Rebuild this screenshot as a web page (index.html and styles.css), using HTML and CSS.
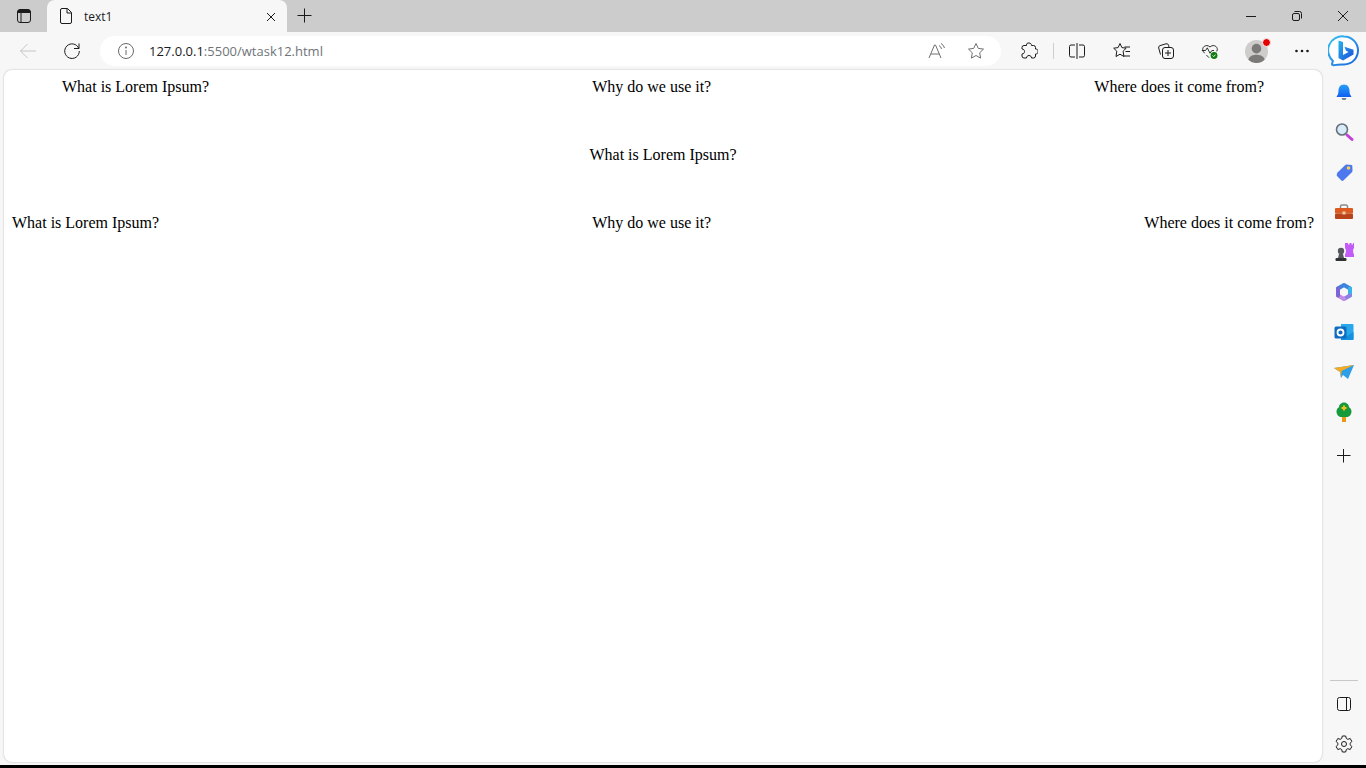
FILE: index.html
```html
<!DOCTYPE html>
<html lang="en">
<head>
<meta charset="utf-8">
<title>text1</title>
<link rel="stylesheet" href="styles.css">
</head>
<body>
<div class="window">
  <header class="tabstrip">
    <div class="tab-actions">
      <svg class="icon" viewBox="0 0 16 16"><rect x="1.500" y="1.500" width="13" height="13" rx="2.500" class="st"/><path d="M5 4.500v10" class="st"/><path d="M1.500 4a2.500 2.500 0 0 1 2.500-2.500h8a2.500 2.500 0 0 1 2.500 2.500v1h-13z" class="fl"/></svg>
    </div>
    <div class="tab">
      <svg class="icon tab-file" viewBox="0 0 16 16"><path d="M4 .5h5.500l4 4V14a1.500 1.500 0 0 1-1.500 1.500H4A1.500 1.500 0 0 1 2.500 14V2A1.500 1.500 0 0 1 4 .5zM9 .5V5h4.500" class="st"/></svg>
      <span class="tab-title">text1</span>
      <svg class="icon-sm" viewBox="0 -1 10 10"><path d="M1 1l8 8M9 1l-8 8" class="st"/></svg>
    </div>
    <div class="new-tab">
      <svg class="icon" viewBox="0 0 16 16"><path d="M7.500 .5v14M.5 7.500h14" class="st"/></svg>
    </div>
    <div class="spacer"></div>
    <div class="winbtn"><svg class="icon-sm" viewBox="0 0 10 10"><path d="M0 5.500h10" class="st"/></svg></div>
    <div class="winbtn"><svg class="icon-sm" viewBox="0 0 10 10"><rect x=".5" y="2.500" width="7" height="7" rx="1.500" class="st"/><path d="M2.500 .5h5a2 2 0 0 1 2 2v5" class="st"/></svg></div>
    <div class="winbtn"><svg class="icon-sm" viewBox="0 0 10 10"><path d="M0 0l10 10M10 0l-10 10" class="st"/></svg></div>
  </header>

  <nav class="toolbar">
    <div class="tbtn"><svg class="icon-l dim" viewBox="0 0 18 18"><path d="M17 9H1.500M8.500 2L1.500 9l7 7" class="st"/></svg></div>
    <div class="tbtn"><svg class="icon-l" viewBox="0 0 18 18"><path d="M15.800 6.500A7.300 7.300 0 1 0 16.300 9M16 1.500v5h-5" class="st"/></svg></div>
    <div class="address">
      <svg class="icon-l info" viewBox="0 0 18 18"><circle cx="9" cy="9" r="7.500" class="st"/><path d="M9 8v5" class="st"/><circle cx="9" cy="5.500" r="1" class="fl"/></svg>
      <span class="url"><span class="url-host">127.0.0.1</span>:5500/wtask12.html</span>
      <svg class="icon-l addr-read" viewBox="0 0 20 18"><path d="M2 16L7.500 3h1L14 16M4 12h8.500M12 3.500a4.500 4.500 0 0 1 2.500 3.500M14 1.500a7 7 0 0 1 3.500 4.500" class="st"/></svg>
      <svg class="icon-l addr-star" viewBox="0 0 18 18"><path d="M9 1.500l2.300 4.900 5.200.7-3.800 3.700.9 5.300L9 13.500l-4.600 2.600.9-5.300L1.500 7.100l5.200-.7z" class="st"/></svg>
    </div>
    <div class="tbtn-n ext"><svg class="icon-l" viewBox="0 0 18 18"><path d="M6.500 3.500C6.500 1 7.500 1 9 1s2.500 1 2.500 2.500h2a2 2 0 0 1 2 2V7c2 0 2.500 1 2.500 2.500S17.500 12 15.500 12v2a2 2 0 0 1-2 2h-2c0-1.500-1-2.500-2.500-2.500S6.500 14.500 6.500 16H4a2 2 0 0 1-2-2v-2c1.500 0 2.500-1 2.500-2.500S3.500 7 2 7V5.500a2 2 0 0 1 2-2z" class="st"/></svg></div>
    <div class="sep"></div>
    <div class="tbtn-n split"><svg class="icon-l" viewBox="0 0 18 18"><path d="M7 3H3a1.500 1.500 0 0 0-1.500 1.500v9A1.500 1.500 0 0 0 3 15h4M11 3h4a1.500 1.500 0 0 1 1.500 1.500v9A1.500 1.500 0 0 1 15 15h-4M9 1v16" class="st"/></svg></div>
    <div class="tbtn fav"><svg class="icon-l" viewBox="0 0 18 18"><path d="M7 1.500l1.900 4.100 4.300.6-3.100 3 .8 5.300L7 12.200l-4 2.300.8-5.300-3.100-3 4.400-.6zM11.500 5H17M12.500 9.500H17M10.500 14H17" class="st"/></svg></div>
    <div class="tbtn"><svg class="icon-l" viewBox="0 0 18 18"><rect x="5.500" y="5.500" width="11" height="11" rx="2.500" class="st"/><path d="M11 8v6M8 11h6M3.500 12.500L1.700 6A2 2 0 0 1 3 3.600L9 1.800a2 2 0 0 1 2.500 1.400l.5 1.800" class="st"/></svg></div>
    <div class="tbtn"><svg class="icon-l" viewBox="0 0 20 18"><path d="M4 11.500L2.500 9.500C0 5 5.500 .5 10 4.500c4.500-4 10 .5 7.500 5M1 8.500h4l2-3 3 6 2-3h2.500M6 13.500l3 3" class="st"/><circle cx="14.500" cy="14" r="3.800" class="ok"/><path d="M12.900 14l1.200 1.200 2-2.200" class="tick"/></svg></div>
    <div class="tbtn avatar-btn">
      <div class="avatar">
        <svg class="avatar-img" viewBox="0 0 24 24"><circle cx="12" cy="12" r="12" fill="#cfcdcb"/><circle cx="12" cy="9" r="5" fill="#7c7a78"/><path d="M3.500 20.500C5 16 9 15.500 12 15.500s7 .5 8.500 5A12 12 0 0 1 3.500 20.500z" fill="#7c7a78"/></svg>
        <span class="badge"></span>
      </div>
    </div>
    <div class="tbtn avatar-btn"><svg class="icon-l" viewBox="0 0 18 18"><circle cx="3.500" cy="9" r="1.300" class="fl"/><circle cx="9" cy="9" r="1.300" class="fl"/><circle cx="14.500" cy="9" r="1.300" class="fl"/></svg></div>
    <div class="bing">
      <svg class="bing-img" viewBox="0 0 32 32">
        <defs>
          <linearGradient id="bingRing" x1="0" y1="0" x2="1" y2="1"><stop offset="0" stop-color="#36c3f0"/><stop offset="1" stop-color="#1a62e0"/></linearGradient>
          <linearGradient id="bingB" x1="0" y1="0" x2="1" y2="1"><stop offset="0" stop-color="#27b4ee"/><stop offset="1" stop-color="#1b4fd8"/></linearGradient>
        </defs>
        <path d="M16 1.500a14 14 0 0 1 0 28c-3 0-6-.2-9.500.6-1.500.3-2.800-.2-2.400-1.500l.8-2.700A14 14 0 0 1 16 1.500z" fill="#fff" stroke="url(#bingRing)" stroke-width="2"/>
        <path d="M10.500 5.500l4.500 1.500v13l5.500-3-2.500-1.200-1.500-4 9 3v4.700L15 25.500 10.500 23z" fill="url(#bingB)"/>
      </svg>
    </div>
  </nav>

  <div class="body-row">
    <main class="page">
      <div class="row row-inset"><span>What is Lorem Ipsum?</span><span>Why do we use it?</span><span>Where does it come from?</span></div>
      <div class="row row-center"><span>What is Lorem Ipsum?</span></div>
      <div class="row"><span>What is Lorem Ipsum?</span><span>Why do we use it?</span><span>Where does it come from?</span></div>
    </main>
    <aside class="sidebar">
      <svg class="app" viewBox="0 0 24 24"><defs><linearGradient id="gBell" x1="0" y1="0" x2="0" y2="1"><stop offset="0" stop-color="#2aa0fa"/><stop offset="1" stop-color="#0f5ff0"/></linearGradient></defs><path d="M12 4.500c3.800 0 5.300 2.800 5.500 6l.3 3.300 1.700 3.200h-15l1.700-3.200.3-3.300c.2-3.200 1.700-6 5.500-6z" fill="url(#gBell)"/><path d="M9.500 18h5l-1 2h-3z" fill="#77808c"/></svg>
      <svg class="app" viewBox="0 0 24 24"><path d="M15 15l5 4.500" stroke="#c23fd8" stroke-width="3" stroke-linecap="round"/><circle cx="10" cy="9.500" r="5.500" fill="#d7ebf9" stroke="#66707c" stroke-width="1.600"/></svg>
      <svg class="app" viewBox="0 0 24 24"><path d="M4.500 13.500L13 5.200c.4-.4 1-.6 1.500-.6l5 .3c.5 0 .8.400.8.800l.2 5c0 .6-.2 1.100-.6 1.500l-8.500 8.300c-.6.600-1.400.6-2 0l-4.400-4.500c-.6-.6-.1-1.900.5-2.500z" fill="#4d78ee"/><circle cx="16.500" cy="8" r="1.800" fill="#f7d24a"/></svg>
      <svg class="app" viewBox="0 0 24 24"><path d="M8.500 8V6.500a1.500 1.500 0 0 1 1.500-1.500h4a1.500 1.500 0 0 1 1.500 1.500V8" fill="none" stroke="#8d8a86" stroke-width="1.500"/><rect x="3" y="8" width="18" height="5.500" rx="1" fill="#dd5a22"/><rect x="3" y="13.500" width="18" height="5.500" rx="1" fill="#b8421a"/><rect x="10.500" y="11.500" width="3" height="3" fill="#f2c9a0"/></svg>
      <svg class="app" viewBox="0 0 24 24"><path d="M14 3h2v1.500h1.500V3h2v1.500H21V3h1v5l-1 2 .5 4H22v3h-9v-3h.5l.5-4-1-2V3z" fill="#c25bf8"/><circle cx="9" cy="11" r="3.200" fill="#55585c"/><path d="M7 14h4l1 4H6z" fill="#55585c"/><rect x="3.500" y="18" width="11" height="3" rx="1" fill="#2f3134"/></svg>
      <svg class="app" viewBox="0 0 24 24"><g fill="none" stroke-width="4" stroke-linejoin="round" stroke-linecap="round"><path d="M6 8.500L12 5l6 3.500" stroke="#3f82e0"/><path d="M18 8.500v7" stroke="#35b6e6"/><path d="M18 15.500L12 19" stroke="#8e7fe6"/><path d="M12 19l-6-3.500" stroke="#c38be6"/><path d="M6 15.500v-7" stroke="#7d65d8"/></g></svg>
      <svg class="app" viewBox="0 0 24 24"><path d="M9 4h11.500a1 1 0 0 1 1 1v14a1 1 0 0 1-1 1H9z" fill="#28a8ea"/><path d="M9 12l6 4 6.500-4v7a1 1 0 0 1-1 1H9z" fill="#1490df"/><rect x="2.500" y="6.500" width="12" height="12" rx="1.500" fill="#0f6cc0"/><circle cx="8.500" cy="12.500" r="3" fill="none" stroke="#fff" stroke-width="1.800"/></svg>
      <svg class="app" viewBox="0 0 24 24"><path d="M2 8l20-3-6 14-5-4-2 3-1-6z" fill="#2c9fe8"/><path d="M2 8l20-3L9.500 11l-.5 7-1-6z" fill="#f5ab22"/></svg>
      <svg class="app" viewBox="0 0 24 24"><rect x="10" y="16" width="4" height="6" fill="#e99a12"/><path d="M12 2.500c3 0 5 2.500 5 4.800 1.700.8 2.500 2.500 2.500 4.200 0 3-2.200 5.500-4.500 5.500H9c-2.300 0-4.500-2.500-4.500-5.500 0-1.700.8-3.400 2.500-4.200 0-2.300 2-4.800 5-4.800z" fill="#179a3c"/><path d="M12 5.500v5M9.500 8h5" stroke="#f2c01e" stroke-width="2"/></svg>
      <svg class="app app-add" viewBox="0 0 24 24"><path d="M11.500 5v13.500M5 11.500h13.500" class="st"/></svg>
      <div class="spacer"></div>
      <div class="side-line"></div>
      <svg class="app side-panel" viewBox="0 0 24 24"><rect x="5.500" y="5.500" width="13" height="13" rx="2" class="st"/><path d="M14.500 5.500v13" class="st"/></svg>
      <svg class="app side-gear" viewBox="0 0 24 24"><path d="M10.300 4h3.400l.6 2.500 1.500.8 2.400-.8 1.700 3-1.800 1.700v1.600l1.800 1.700-1.700 3-2.400-.8-1.500.8-.6 2.500h-3.400l-.6-2.500-1.500-.8-2.400.8-1.700-3 1.800-1.700v-1.600L4.100 9.500l1.700-3 2.400.8 1.500-.8z" class="st" stroke-linejoin="round"/><circle cx="12" cy="12" r="2.500" class="st"/></svg>
    </aside>
  </div>
  <div class="taskbar"></div>
</div>
</body>
</html>
```
FILE: styles.css
```css
* { box-sizing: border-box; }
html, body { margin: 0; height: 100%; overflow: hidden; }
.window { display: flex; flex-direction: column; width: 1366px; height: 768px; background: #f7f7f7; }
.st { fill: none; stroke: currentColor; stroke-width: 1; }
.fl { fill: currentColor; }
.ok { fill: #107c10; }
.tick { fill: none; stroke: #fff; stroke-width: 1; }
svg { display: block; flex: none; color: #1b1b1b; }
.icon { width: 16px; height: 16px; }
.icon-sm { width: 10px; height: 10px; }
.icon-l { width: 18px; height: 18px; }
.spacer { flex: 1; }

.tabstrip { display: flex; align-items: center; height: 32px; background: #cccccc; flex: none; }
.tab-actions { display: flex; justify-content: center; align-items: center; width: 47px; height: 32px; }
.tab { display: flex; align-items: center; width: 240px; height: 32px; padding: 0 11px; background: #f7f7f7; border-radius: 8px 8px 0 0; }
.tab-file { margin-right: 10px; }
.tab-title { flex: 1; font: 12px "Open Sans", sans-serif; color: #1b1b1b; }
.new-tab { display: flex; justify-content: center; align-items: center; width: 36px; height: 32px; }
.winbtn { display: flex; justify-content: center; align-items: center; width: 46px; height: 32px; }

.toolbar { display: flex; align-items: center; height: 38px; padding: 4px 0 4px 6px; flex: none; }
.tbtn { display: flex; justify-content: center; align-items: center; width: 44px; height: 30px; }
.tbtn-n { display: flex; justify-content: center; align-items: center; width: 32px; height: 30px; }
.dim { color: #c5c5c5; }
.address { display: flex; align-items: center; width: 901px; height: 30px; margin-left: 6px; padding: 0 16px 0 17px; background: #fff; border-radius: 15px; }
.info { color: #6b6b6b; }
.url { flex: 1; margin-left: 14px; font: 13px "Open Sans", sans-serif; color: #6f7479; white-space: nowrap; }
.url-host { color: #1b1b1b; }
.addr-read { width: 20px; color: #6f6f6f; margin-right: 20px; }
.addr-star { color: #6f6f6f; }
.ext { margin-left: 12px; }
.sep { width: 1px; height: 16px; margin-left: 8px; background: #cfcfcf; }
.split { margin-left: 7px; }
.fav { margin-left: 7px; }
.avatar-btn { margin-left: 2px; }
.avatar { position: relative; width: 23px; height: 23px; }
.avatar-img { width: 23px; height: 23px; }
.badge { position: absolute; top: -2px; right: -3px; width: 7px; height: 7px; border-radius: 50%; background: #e60000; border: 1px solid #f7f7f7; box-sizing: content-box; }
.bing { display: flex; justify-content: center; align-items: center; width: 40px; height: 38px; }
.bing-img { width: 32px; height: 32px; }

.body-row { display: flex; flex: 1; min-height: 0; }
.page { width: 1318px; height: 692px; margin-left: 4px; padding: 8px; background: #fff; border-radius: 8px; box-shadow: 0 0 2px rgba(0,0,0,.28); font: 16px/18px "Liberation Serif", serif; color: #000; display: flex; flex-direction: column; gap: 50px; }
.row { display: flex; justify-content: space-between; height: 18px; }
.row-inset { padding: 0 50px; }
.row-center { justify-content: center; }

.sidebar { display: flex; flex-direction: column; align-items: center; width: 44px; padding-top: 10px; height: 695px; }
.app { width: 24px; height: 24px; margin-bottom: 16px; }
.app-add { margin-top: 4px; margin-bottom: 0; }
.side-line { width: 28px; height: 1px; background: #c8c8c8; margin-bottom: 11px; }
.side-panel { margin-bottom: 16px; }
.side-gear { margin-bottom: 9px; }
.taskbar { height: 3px; background: #000; flex: none; }
```
